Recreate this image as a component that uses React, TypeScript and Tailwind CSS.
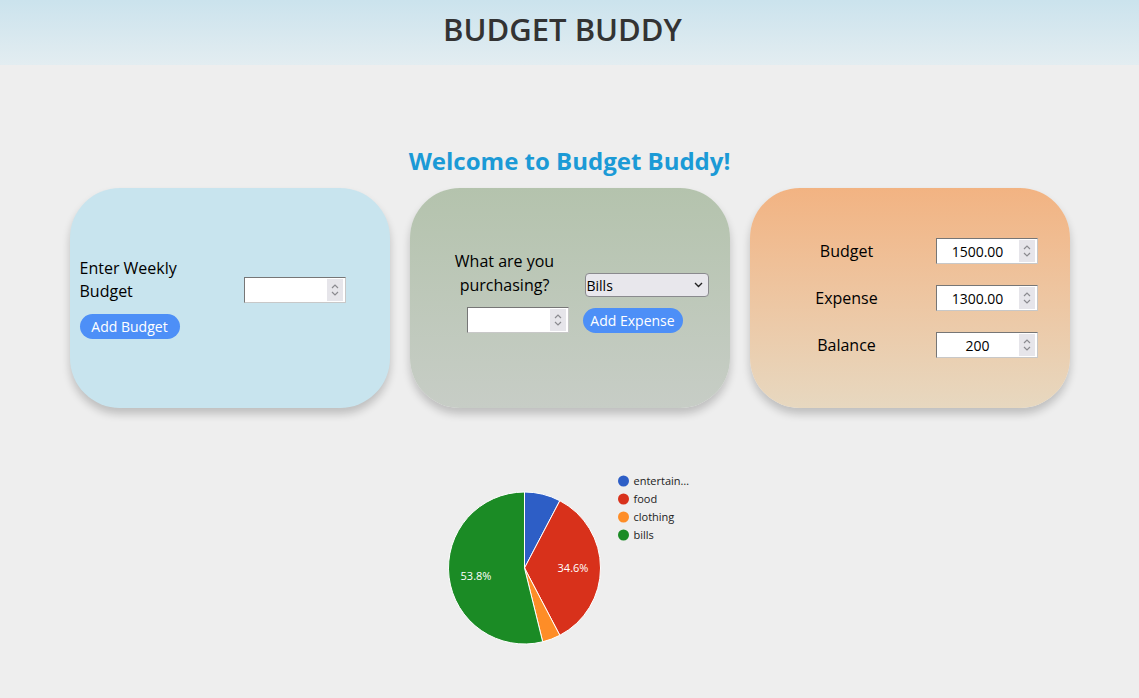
import React from "react";

type Slice = { name: string; value: number; color: string };

const slices: Slice[] = [
  { name: "entertainment", value: 100, color: "#2d5ec6" },
  { name: "food", value: 450, color: "#d8311b" },
  { name: "clothing", value: 50, color: "#fe8d27" },
  { name: "bills", value: 700, color: "#1b8b25" },
];

function Spinner() {
  return (
    <span className="flex h-[22px] w-[16px] shrink-0 flex-col items-center justify-center bg-[#e6e5ea]">
      <svg width="10" height="16" viewBox="0 0 10 16" fill="none" stroke="#8b8b90" strokeWidth="1.2">
        <path d="M2 6 L5 3 L8 6" />
        <path d="M2 10 L5 13 L8 10" />
      </svg>
    </span>
  );
}

function NumberBox({ value, center }: { value?: string; center?: boolean }) {
  return (
    <div className="flex h-[26px] w-[102px] items-center border border-[#767676] border-r-[#c8c8c8] border-b-[#c8c8c8] bg-white pr-[2px]">
      <input
        type="text"
        defaultValue={value}
        className={`h-full w-full min-w-0 bg-transparent px-1 text-[14px] text-black outline-none ${center ? "text-center" : ""}`}
      />
      <Spinner />
    </div>
  );
}

function PieChart() {
  const total = slices.reduce((s, x) => s + x.value, 0);
  const cx = 84.5;
  const cy = 98;
  const r = 76;
  let angle = 0;
  const paths = slices.map((s) => {
    const start = angle;
    const sweep = (s.value / total) * Math.PI * 2;
    angle += sweep;
    const x1 = cx + r * Math.sin(start);
    const y1 = cy - r * Math.cos(start);
    const x2 = cx + r * Math.sin(angle);
    const y2 = cy - r * Math.cos(angle);
    const large = sweep > Math.PI ? 1 : 0;
    return (
      <path
        key={s.name}
        d={`M${cx} ${cy} L${x1} ${y1} A${r} ${r} 0 ${large} 1 ${x2} ${y2} Z`}
        fill={s.color}
        stroke="#ffffff"
        strokeWidth="1"
      />
    );
  });

  const legend = ["entertain…", "food", "clothing", "bills"];

  return (
    <svg width="260" height="185" viewBox="0 0 260 185" style={{ fontFamily: "'Open Sans', sans-serif" }}>
      {paths}
      <text x="133" y="102" fill="#fff" fontSize="11" textAnchor="middle">34.6%</text>
      <text x="36" y="110" fill="#fff" fontSize="11" textAnchor="middle">53.8%</text>
      {slices.map((s, i) => (
        <g key={s.name}>
          <circle cx="183.5" cy={11 + i * 18} r="5.5" fill={s.color} />
          <text x="193.5" y={15 + i * 18} fontSize="11" fill="#222">{legend[i]}</text>
        </g>
      ))}
    </svg>
  );
}

export default function App() {
  return (
    <div className="min-h-[698px] bg-[#eeeeee] font-['Open_Sans',sans-serif] text-black">
      <header className="flex h-[65px] items-center justify-center bg-gradient-to-b from-[#cbe3ed] to-[#e3edf1] pr-[14px] pb-[7px]">
        <h1 className="text-[31px] font-semibold text-[#333]">BUDGET BUDDY</h1>
      </header>

      <h2 className="mt-[80px] text-center text-[24px] leading-[32px] font-bold text-[#1b9ad6]">
        Welcome to Budget Buddy!
      </h2>

      <div className="mt-[11px] flex justify-center gap-[20px]">
        {/* budget entry */}
        <div className="flex h-[220px] w-[320px] flex-col justify-center rounded-[50px] bg-[#c8e4ee] pl-[10px] shadow-[0_6px_8px_rgba(0,0,0,0.2)]">
          <div className="flex items-end">
            <label className="w-[130px] text-[16px] leading-[23px]">Enter Weekly Budget</label>
            <div className="ml-[34px]">
              <NumberBox />
            </div>
          </div>
          <button className="mt-[11px] h-[25px] w-[100px] rounded-full bg-[#4d8ff7] text-[14px] text-white">
            Add Budget
          </button>
        </div>

        {/* expense entry */}
        <div className="flex h-[220px] w-[320px] flex-col justify-center rounded-[50px] bg-gradient-to-b from-[#b4c3ad] to-[#c7cdc6] pb-[14px] shadow-[0_6px_8px_rgba(0,0,0,0.2)]">
          <div className="flex items-end pl-[30px]">
            <label className="w-[130px] text-center text-[16px] leading-[24px]">What are you purchasing?</label>
            <div className="relative ml-[15px]">
              <select className="h-[24px] w-[124px] appearance-none rounded-[4px] border border-[#8a8a8e] bg-[#e8e7ec] pl-[1px] text-[14px] text-black outline-none">
                <option>Bills</option>
                <option>Food</option>
                <option>Clothing</option>
                <option>Entertainment</option>
              </select>
              <svg className="pointer-events-none absolute top-[9px] right-[6px]" width="9" height="6" viewBox="0 0 9 6" fill="none" stroke="#222" strokeWidth="1.4">
                <path d="M1 1 L4.5 4.5 L8 1" />
              </svg>
            </div>
          </div>
          <div className="mt-[10px] flex items-center pl-[57px]">
            <NumberBox />
            <button className="ml-[14px] h-[25px] w-[100px] rounded-full bg-[#4d8ff7] text-[14px] text-white">
              Add Expense
            </button>
          </div>
        </div>

        {/* totals */}
        <div className="flex h-[220px] w-[320px] flex-col justify-center gap-[21px] rounded-[50px] bg-gradient-to-b from-[#f2b382] to-[#e7d8c0] pl-[30px] shadow-[0_6px_8px_rgba(0,0,0,0.2)]">
          {[
            ["Budget", "1500.00"],
            ["Expense", "1300.00"],
            ["Balance", "200"],
          ].map(([label, value]) => (
            <div key={label} className="flex items-center">
              <span className="w-[134px] text-center text-[16px]">{label}</span>
              <div className="ml-[22px]">
                <NumberBox value={value} center />
              </div>
            </div>
          ))}
        </div>
      </div>

      <div className="mt-[62px] flex justify-center">
        <PieChart />
      </div>
    </div>
  );
}
